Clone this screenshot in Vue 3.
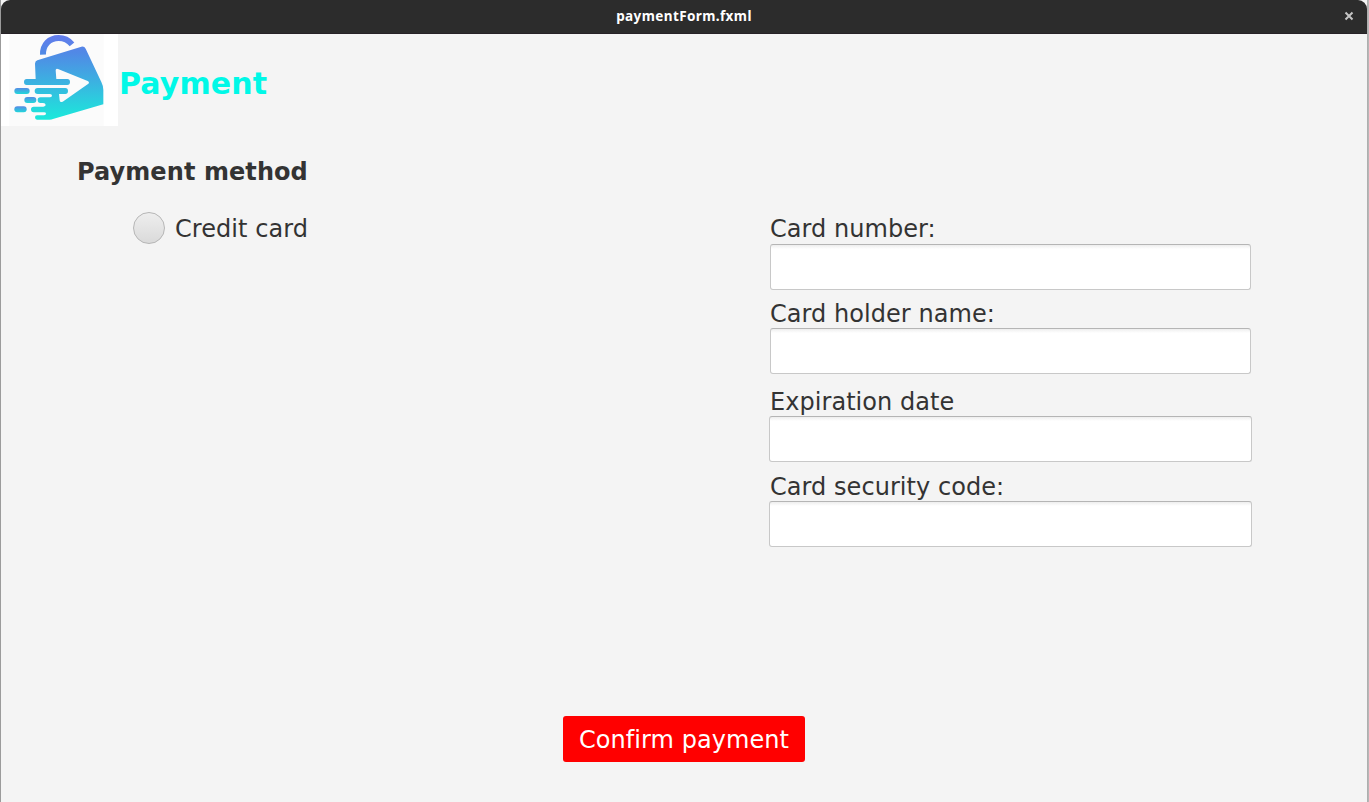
<script setup>
import { reactive, ref } from 'vue'

const method = ref('')
const fields = reactive([
  { id: 'number', label: 'Card number:', value: '' },
  { id: 'holder', label: 'Card holder name:', value: '' },
  { id: 'expiry', label: 'Expiration date', value: '', wide: true },
  { id: 'code', label: 'Card security code:', value: '', wide: true },
])
</script>

<template>
  <div class="desktop">
    <div class="window">
      <header class="titlebar">
        <span class="title">paymentForm.fxml</span>
        <svg class="close" viewBox="0 0 10 10"><path d="M1.5 1.5L8.5 8.5M8.5 1.5L1.5 8.5" /></svg>
      </header>
      <div class="brand">
        <svg class="logo" viewBox="3 12 351 276">
          <defs>
            <linearGradient id="bag" gradientUnits="userSpaceOnUse" x1="0" y1="15" x2="0" y2="268">
              <stop offset="0" stop-color="#637bec" />
              <stop offset="0.2" stop-color="#5188e6" />
              <stop offset="0.55" stop-color="#3cb1e1" />
              <stop offset="1" stop-color="#1be9db" />
            </linearGradient>
            <linearGradient id="dot" x1="0" y1="0" x2="0" y2="1">
              <stop offset="0" stop-color="#568be5" />
              <stop offset="1" stop-color="#20d9db" />
            </linearGradient>
          </defs>
          <rect x="3" y="12" width="351" height="276" fill="#fff" />
          <rect x="28" y="12" width="283" height="276" fill="#fbfbfb" />
          <path d="M129 74C128 44 148 24 176 24C193 24 206 31 216 43" fill="none" stroke="url(#bag)" stroke-width="18" />
          <path
            d="M112 91L244 50Q253 48 257 56L304 156Q310 168 310 180V223L159 267Q155 269 149 269H111Q105 269 105 262Q105 256 111 256H132Q138 255 138 251Q138 247 132 247H101Q93 247 93 238Q93 230 101 230H130Q137 229 137 225Q137 219 129 219H121Q113 219 113 210Q113 202 121 202H150Q156 201 156 197Q156 192 150 192H113Q104 192 104 183Q104 174 113 174H135V165H80Q72 165 72 156Q72 147 80 147H107L105 101Q105 94 112 91Z"
            fill="url(#bag)"
          />
          <path
            d="M174 117L263 153Q271 158 263 163L188 215Q179 219 179 211L177 192H196Q204 192 204 183Q204 174 196 174H130V165H202Q210 165 210 156Q210 147 202 147H169L167 121Q167 115 174 117Z"
            fill="#fbfbfb"
          />
          <rect x="43" y="174" width="46" height="18" rx="9" fill="url(#dot)" />
          <rect x="73" y="201" width="36" height="18" rx="9" fill="url(#dot)" />
          <rect x="43" y="229" width="37" height="18" rx="9" fill="url(#dot)" />
        </svg>
        <h1>Payment</h1>
      </div>
      <main class="form">
        <section class="methods">
          <h2>Payment method</h2>
          <label class="option">
            <input v-model="method" type="radio" value="credit" />
            <span>Credit card</span>
          </label>
        </section>
        <section class="details">
          <div v-for="field in fields" :key="field.id" class="field" :class="{ wide: field.wide }">
            <label :for="field.id">{{ field.label }}</label>
            <input :id="field.id" v-model="field.value" type="text" />
          </div>
        </section>
      </main>
      <footer class="actions">
        <button type="button">Confirm payment</button>
      </footer>
    </div>
  </div>
</template>

<style>
body {
  margin: 0;
  overflow: hidden;
}
</style>

<style scoped>
.desktop {
  box-sizing: border-box;
  width: 1369px;
  height: 802px;
  padding: 0 2px 0 1px;
  background: linear-gradient(90deg, #9b9b9b 0 1px, #f4f4f4 1px 1367px, #aaa 1367px, #bbb 1369px);
  font: 24px/28px "DejaVu Sans", sans-serif;
  letter-spacing: 0.05px;
  font-variant-ligatures: none;
  color: #333;
}
.window {
  display: flex;
  flex-direction: column;
  height: 802px;
}
.titlebar {
  box-sizing: border-box;
  flex: none;
  display: grid;
  grid-template-columns: 1fr auto 1fr;
  align-items: center;
  height: 34px;
  padding: 0 13px 2px 0;
  background: #2c2c2c;
  border-bottom: 1px solid #272227;
  border-radius: 9px 9px 0 0;
}
.title {
  grid-column: 2;
  margin-left: 13px;
  font: bold 13.5px/20px "Noto Sans", sans-serif;
  letter-spacing: 0.4px;
  color: #fff;
}
.close {
  justify-self: end;
  width: 10px;
  height: 10px;
  fill: none;
  stroke: #c4c4c4;
  stroke-width: 2;
}
.brand {
  flex: none;
  display: flex;
  height: 92px;
}
.logo {
  width: 117px;
  height: 92px;
}
h1 {
  margin: 32px 0 0 1px;
  font-size: 30px;
  line-height: 36px;
  letter-spacing: 0.12px;
  color: #00f8e7;
}
.form {
  flex: none;
  display: flex;
  height: 590px;
}
.methods {
  box-sizing: border-box;
  width: 768px;
  padding: 32px 0 0 76px;
}
h2 {
  margin: 0;
  font-size: 24px;
  line-height: 28px;
  letter-spacing: 0.08px;
}
.option {
  display: flex;
  align-items: center;
  gap: 10px;
  width: max-content;
  margin: 26px 0 0 56px;
}
.option span {
  padding-top: 2px;
}
.option input {
  appearance: none;
  box-sizing: border-box;
  width: 32px;
  height: 32px;
  margin: 0;
  border: 1px solid #b6b6b6;
  border-radius: 50%;
  background: linear-gradient(#eee, #dadada);
}
.option input:checked {
  background: radial-gradient(#333 0 6px, #e4e4e4 7px);
}
.details {
  width: 483px;
  padding-top: 89px;
}
.field {
  display: flex;
  flex-direction: column;
  padding: 0 1px;
  margin-bottom: 10px;
}
.field:nth-child(2) {
  margin-bottom: 14px;
}
.field:nth-child(3) {
  margin-bottom: 11px;
}
.field:nth-child(n + 2) label {
  height: 28px;
}
.field label {
  height: 29px;
}
.field input {
  box-sizing: border-box;
  width: 100%;
  height: 46px;
  padding: 6px 12px;
  border: 1px solid #c8c8c8;
  border-top-color: #b5b5b5;
  border-radius: 3px;
  background: linear-gradient(#eee, #fff 4px);
  color: inherit;
  font: inherit;
  outline: none;
}
.field.wide {
  padding: 0;
}
.field.wide label {
  padding-left: 1px;
}
.actions {
  display: flex;
  justify-content: center;
}
button {
  width: 242px;
  height: 46px;
  padding: 2px 0 0;
  border: 0;
  border-radius: 3px;
  background: #f00;
  color: #fff;
  font: inherit;
  letter-spacing: inherit;
  font-variant-ligatures: none;
}
</style>
